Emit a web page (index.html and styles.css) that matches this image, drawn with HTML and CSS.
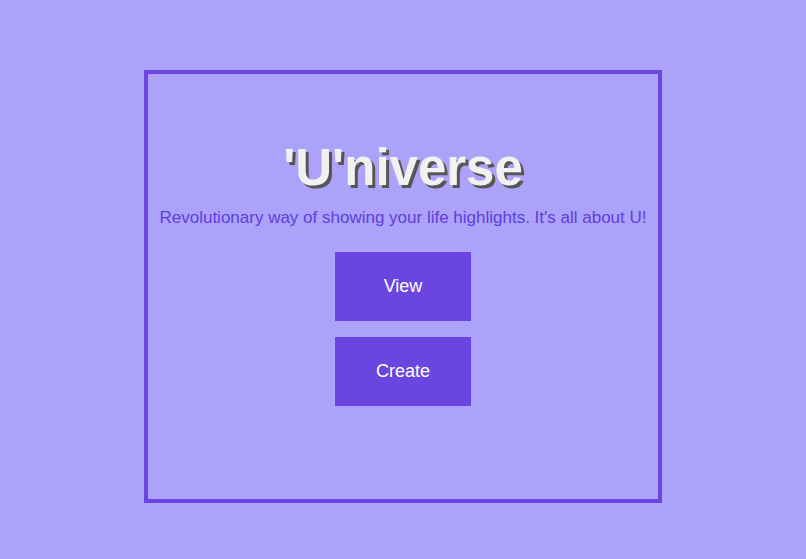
FILE: index.html
```html
<!DOCTYPE html>
<html lang="en">

<head>
    <meta charset="UTF-8">
    <meta name="viewport" content="width=device-width, initial-scale=1.0">
    <title>'U'niverse</title>
    <link rel="stylesheet" href="styles.css">
</head>

<body>

    <div class="landing">
        <h1 class="title">'U'niverse</h1>
        <p class="tagline">Revolutionary way of showing your life highlights. It's all about U!</p>
        <div class="actions">
            <button class="action-btn">View</button>
            <button class="action-btn">Create</button>
        </div>
    </div>

</body>

</html>
```

FILE: styles.css
```css
html,
body {
    height: 100%;
    margin: 0;
}

body {
    background-color: #aca2f9;
    font-family: "Liberation Sans", Arial, sans-serif;
    padding-top: 70px;
    box-sizing: border-box;
}

.landing {
    width: 518px;
    height: 433px;
    box-sizing: border-box;
    margin: 0 auto;
    border: 4px solid #6a45e0;
    display: flex;
    flex-direction: column;
    align-items: center;
    padding-top: 64px;
}

.title {
    margin: 0;
    font-size: 51px;
    font-weight: bold;
    color: #f1f1f1;
    text-shadow: 3px 3px 0 #555;
}

.tagline {
    margin: 11px 0 0;
    font-size: 17px;
    color: #5e3fdc;
    white-space: nowrap;
}

.actions {
    margin-top: 24px;
    display: flex;
    flex-direction: column;
    gap: 16px;
}

.action-btn {
    width: 136px;
    height: 69px;
    background-color: #6a45e0;
    color: #fff;
    border: none;
    font-family: inherit;
    font-size: 18px;
    cursor: pointer;
}

.action-btn:hover {
    background-color: #5a35d0;
}
```
